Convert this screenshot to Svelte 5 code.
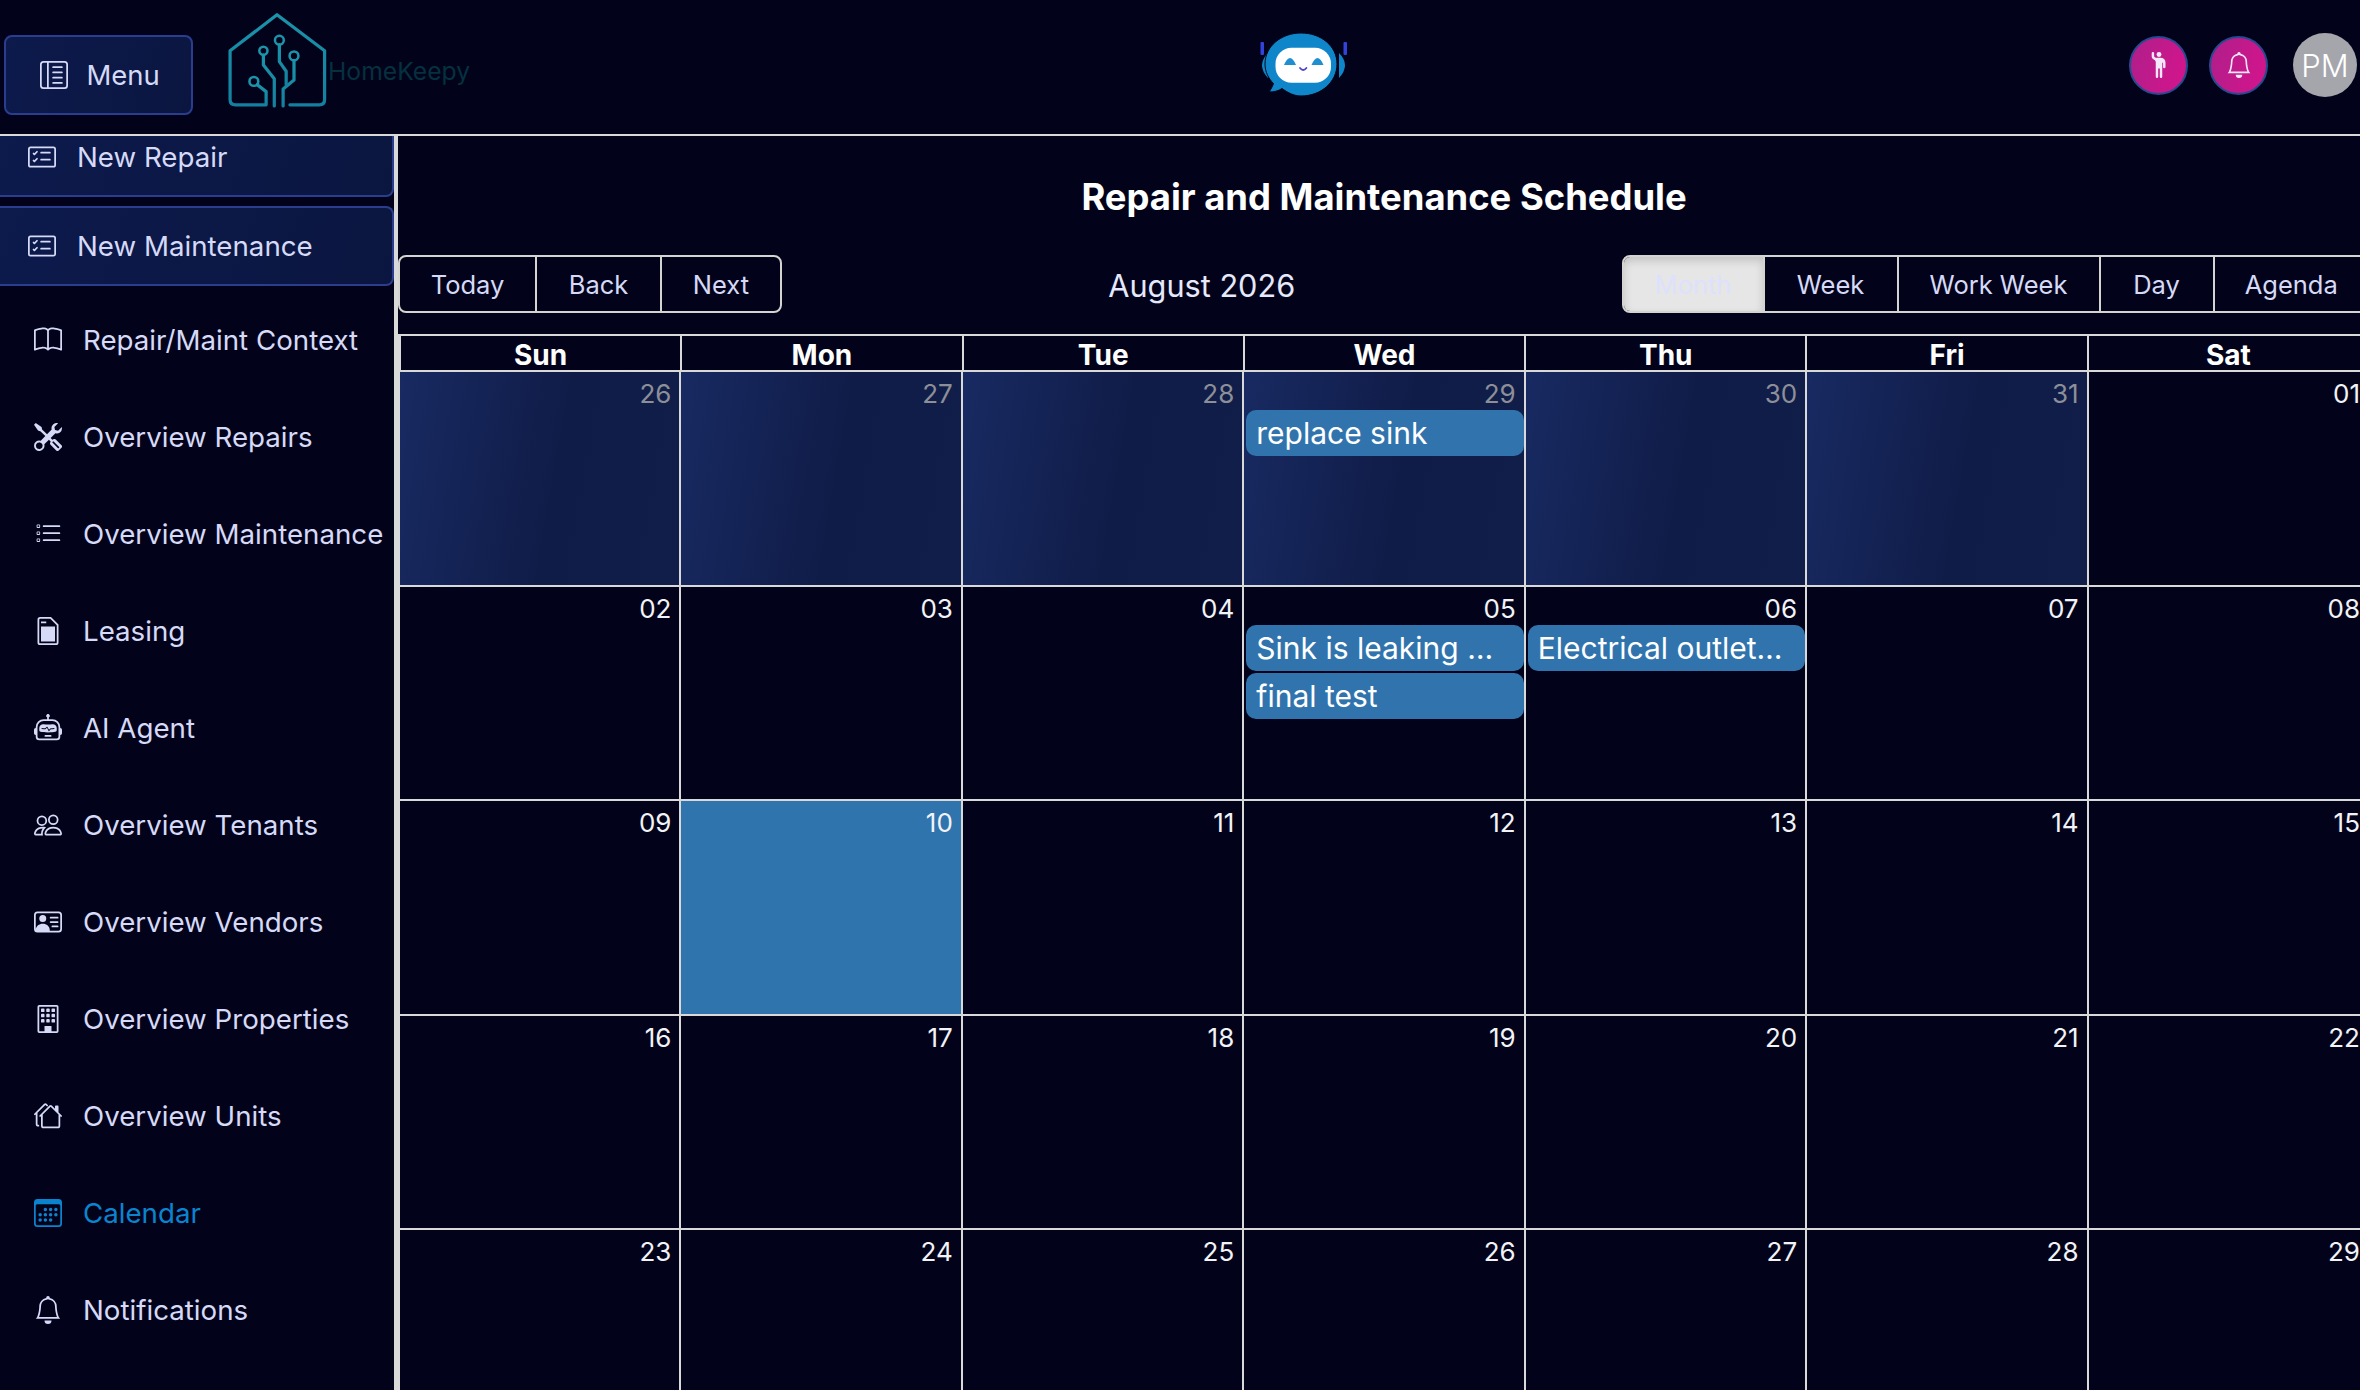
<script lang="ts">
	type Nav = { label: string; icon: string; active?: boolean };

	const icons: Record<string, string[]> = {
		menu: [
			'M12.5 3a.5.5 0 0 1 0 1h-5a.5.5 0 0 1 0-1zm0 3a.5.5 0 0 1 0 1h-5a.5.5 0 0 1 0-1zm.5 3.5a.5.5 0 0 0-.5-.5h-5a.5.5 0 0 0 0 1h5a.5.5 0 0 0 .5-.5m-.5 2.5a.5.5 0 0 1 0 1h-5a.5.5 0 0 1 0-1z',
			'M16 2a2 2 0 0 0-2-2H2a2 2 0 0 0-2 2v12a2 2 0 0 0 2 2h12a2 2 0 0 0 2-2zM4 1v14H2a1 1 0 0 1-1-1V2a1 1 0 0 1 1-1zm1 0h9a1 1 0 0 1 1 1v12a1 1 0 0 1-1 1H5z'
		],
		checklist: [
			'M14.5 3a.5.5 0 0 1 .5.5v9a.5.5 0 0 1-.5.5h-13a.5.5 0 0 1-.5-.5v-9a.5.5 0 0 1 .5-.5zm-13-1A1.5 1.5 0 0 0 0 3.5v9A1.5 1.5 0 0 0 1.5 14h13a1.5 1.5 0 0 0 1.5-1.5v-9A1.5 1.5 0 0 0 14.5 2z',
			'M7 5.5a.5.5 0 0 1 .5-.5h5a.5.5 0 0 1 0 1h-5a.5.5 0 0 1-.5-.5m-1.496-.854a.5.5 0 0 1 0 .708l-1.5 1.5a.5.5 0 0 1-.708 0l-.5-.5a.5.5 0 1 1 .708-.708l.146.147 1.146-1.147a.5.5 0 0 1 .708 0M7 9.5a.5.5 0 0 1 .5-.5h5a.5.5 0 0 1 0 1h-5a.5.5 0 0 1-.5-.5m-1.496-.854a.5.5 0 0 1 0 .708l-1.5 1.5a.5.5 0 0 1-.708 0l-.5-.5a.5.5 0 0 1 .708-.708l.146.147 1.146-1.147a.5.5 0 0 1 .708 0'
		],
		book: [
			'M1 2.828c.885-.37 2.154-.769 3.388-.893 1.33-.134 2.458.063 3.112.752v9.746c-.935-.53-2.12-.603-3.213-.493-1.18.12-2.37.461-3.287.811zm7.5-.141c.654-.689 1.782-.886 3.112-.752 1.234.124 2.503.523 3.388.893v9.923c-.918-.35-2.107-.692-3.287-.81-1.094-.111-2.278-.039-3.213.492zM8 1.783C7.015.936 5.587.81 4.287.94c-1.514.153-3.042.672-3.994 1.105A.5.5 0 0 0 0 2.5v11a.5.5 0 0 0 .707.455c.882-.4 2.303-.881 3.68-1.02 1.409-.142 2.59.087 3.223.877a.5.5 0 0 0 .78 0c.633-.79 1.814-1.019 3.222-.877 1.378.139 2.8.62 3.681 1.02A.5.5 0 0 0 16 13.5v-11a.5.5 0 0 0-.293-.455c-.952-.433-2.48-.952-3.994-1.105C10.413.809 8.985.936 8 1.783'
		],
		tools: [
			'M1 0 0 1l2.2 3.081a1 1 0 0 0 .815.419h.07a1 1 0 0 1 .708.293l2.675 2.675-2.617 2.654A3.003 3.003 0 0 0 0 13a3 3 0 1 0 5.878-.851l2.654-2.617.968.968-.305.914a1 1 0 0 0 .242 1.023l3.27 3.27a.997.997 0 0 0 1.414 0l1.586-1.586a.997.997 0 0 0 0-1.414l-3.27-3.27a1 1 0 0 0-1.023-.242L10.5 9.5l-.96-.96 2.68-2.643A3.005 3.005 0 0 0 16 3q0-.405-.102-.777l-2.14 2.141L12 4l-.364-1.757L13.777.102a3 3 0 0 0-3.675 3.68L7.462 6.46 4.793 3.793a1 1 0 0 1-.293-.707v-.071a1 1 0 0 0-.419-.814zm9.646 10.646a.5.5 0 0 1 .708 0l2.914 2.915a.5.5 0 0 1-.707.707l-2.915-2.914a.5.5 0 0 1 0-.708M3 11l.471.242.529.026.287.445.445.287.026.529L5 13l-.242.471-.026.529-.445.287-.287.445-.529.026L3 15l-.471-.242L2 14.732l-.287-.445L1.268 14l-.026-.529L1 13l.242-.471.026-.529.445-.287.287-.445.529-.026z'
		],
		listTask: [
			'M2 2.5a.5.5 0 0 0-.5.5v1a.5.5 0 0 0 .5.5h1a.5.5 0 0 0 .5-.5V3a.5.5 0 0 0-.5-.5zM3 3H2v1h1z',
			'M5 3.5a.5.5 0 0 1 .5-.5h9a.5.5 0 0 1 0 1h-9a.5.5 0 0 1-.5-.5M5.5 7a.5.5 0 0 0 0 1h9a.5.5 0 0 0 0-1zm0 4a.5.5 0 0 0 0 1h9a.5.5 0 0 0 0-1z',
			'M1.5 7a.5.5 0 0 1 .5-.5h1a.5.5 0 0 1 .5.5v1a.5.5 0 0 1-.5.5H2a.5.5 0 0 1-.5-.5zM2 7h1v1H2zm0 3.5a.5.5 0 0 0-.5.5v1a.5.5 0 0 0 .5.5h1a.5.5 0 0 0 .5-.5v-1a.5.5 0 0 0-.5-.5zm1 .5H2v1h1z'
		],
		lease: [
			'M3.5 0h6.2L14 4.3V14.5a1.5 1.5 0 0 1-1.5 1.5h-9A1.5 1.5 0 0 1 2 14.5v-13A1.5 1.5 0 0 1 3.5 0zm0 1a.5.5 0 0 0-.5.5v13a.5.5 0 0 0 .5.5h9a.5.5 0 0 0 .5-.5V4.7L9.3 1z',
			'M4 2.6h3v1H4zM4 5.4h8V14H4z'
		],
		robot: [
			'M6 12.5a.5.5 0 0 1 .5-.5h3a.5.5 0 0 1 0 1h-3a.5.5 0 0 1-.5-.5M3 8.062C3 6.76 4.235 5.765 5.53 5.886a26.6 26.6 0 0 0 4.94 0C11.765 5.765 13 6.76 13 8.062v1.157a.93.93 0 0 1-.765.935c-.845.147-2.34.346-4.235.346s-3.39-.2-4.235-.346A.93.93 0 0 1 3 9.219zm4.542-.827a.25.25 0 0 0-.217.068l-.92.9a25 25 0 0 1-1.871-.183.25.25 0 0 0-.068.495c.55.076 1.232.149 2.02.193a.25.25 0 0 0 .189-.071l.754-.736.847 1.71a.25.25 0 0 0 .404.062l.932-.97a25 25 0 0 0 1.922-.188.25.25 0 0 0-.068-.495c-.538.074-1.207.145-1.98.189a.25.25 0 0 0-.166.076l-.754.785-.842-1.7a.25.25 0 0 0-.182-.135',
			'M8.5 1.866a1 1 0 1 0-1 0V3h-2A4.5 4.5 0 0 0 1 7.5V8a1 1 0 0 0-1 1v2a1 1 0 0 0 1 1v1a2 2 0 0 0 2 2h10a2 2 0 0 0 2-2v-1a1 1 0 0 0 1-1V9a1 1 0 0 0-1-1v-.5A4.5 4.5 0 0 0 10.5 3h-2zM14 7.5V13a1 1 0 0 1-1 1H3a1 1 0 0 1-1-1V7.5A3.5 3.5 0 0 1 5.5 4h5A3.5 3.5 0 0 1 14 7.5'
		],
		people: [
			'M15 14s1 0 1-1-1-4-5-4-5 3-5 4 1 1 1 1zm-7.978-1L7 12.996c.001-.264.167-1.03.76-1.72C8.312 10.629 9.282 10 11 10c1.717 0 2.687.63 3.24 1.276.593.69.758 1.457.76 1.72l-.008.002-.014.002zM11 7a2 2 0 1 0 0-4 2 2 0 0 0 0 4m3-2a3 3 0 1 1-6 0 3 3 0 0 1 6 0M6.936 9.28a6 6 0 0 0-1.23-.247A7 7 0 0 0 5 9c-4 0-5 3-5 4q0 1 1 1h4.216A2.24 2.24 0 0 1 5 13c0-1.01.377-2.042 1.09-2.904.243-.294.526-.569.846-.816M4.92 10A5.5 5.5 0 0 0 4 13H1c0-.26.164-1.03.76-1.724.545-.636 1.492-1.256 3.16-1.275ZM1.5 5.5a3 3 0 1 1 6 0 3 3 0 0 1-6 0m3-2a2 2 0 1 0 0 4 2 2 0 0 0 0-4'
		],
		vcard: [
			'M5 8a2 2 0 1 0 0-4 2 2 0 0 0 0 4m4-2.5a.5.5 0 0 1 .5-.5h4a.5.5 0 0 1 0 1h-4a.5.5 0 0 1-.5-.5M9 8a.5.5 0 0 1 .5-.5h4a.5.5 0 0 1 0 1h-4A.5.5 0 0 1 9 8m1 2.5a.5.5 0 0 1 .5-.5h3a.5.5 0 0 1 0 1h-3a.5.5 0 0 1-.5-.5',
			'M2 2a2 2 0 0 0-2 2v8a2 2 0 0 0 2 2h12a2 2 0 0 0 2-2V4a2 2 0 0 0-2-2zM1 4a1 1 0 0 1 1-1h12a1 1 0 0 1 1 1v8a1 1 0 0 1-1 1H8.96q.04-.245.04-.5C9 10.567 7.21 9 5 9c-2.086 0-3.8 1.398-3.984 3.181A1 1 0 0 1 1 12z'
		],
		building: [
			'M4 2.5a.5.5 0 0 1 .5-.5h1a.5.5 0 0 1 .5.5v1a.5.5 0 0 1-.5.5h-1a.5.5 0 0 1-.5-.5zm3 0a.5.5 0 0 1 .5-.5h1a.5.5 0 0 1 .5.5v1a.5.5 0 0 1-.5.5h-1a.5.5 0 0 1-.5-.5zm3.5-.5a.5.5 0 0 0-.5.5v1a.5.5 0 0 0 .5.5h1a.5.5 0 0 0 .5-.5v-1a.5.5 0 0 0-.5-.5zM4 5.500a.5.5 0 0 1 .5-.5h1a.5.5 0 0 1 .5.5v1a.5.5 0 0 1-.5.5h-1a.5.5 0 0 1-.5-.5zM7.500 5a.5.5 0 0 0-.5.5v1a.5.5 0 0 0 .5.5h1a.5.5 0 0 0 .5-.5v-1a.5.5 0 0 0-.5-.5zm2.500.5a.5.5 0 0 1 .5-.5h1a.5.5 0 0 1 .5.5v1a.5.5 0 0 1-.5.5h-1a.5.5 0 0 1-.5-.5zM4.500 8a.5.5 0 0 0-.5.5v1a.5.5 0 0 0 .5.5h1a.5.5 0 0 0 .5-.5v-1a.5.5 0 0 0-.5-.5zm2.500.5a.5.5 0 0 1 .5-.5h1a.5.5 0 0 1 .5.5v1a.5.5 0 0 1-.5.5h-1a.5.5 0 0 1-.5-.5zm3.500-.5a.5.5 0 0 0-.5.5v1a.5.5 0 0 0 .5.5h1a.5.5 0 0 0 .5-.5v-1a.5.5 0 0 0-.5-.5z',
			'M2 1a1 1 0 0 1 1-1h10a1 1 0 0 1 1 1v14a1 1 0 0 1-1 1H3a1 1 0 0 1-1-1zm1 0v14h10V1z',
			'M6 12h4v3.5H6z'
		],
		houses: [
			'M5.793 1a1 1 0 0 1 1.414 0l.647.646a.5.5 0 1 1-.708.708L6.5 1.707 2 6.207V12.5a.5.5 0 0 0 .5.5.5.5 0 0 1 0 1A1.5 1.5 0 0 1 1 12.5V7.207l-.146.147a.5.5 0 0 1-.708-.708zm3 1a1 1 0 0 1 1.414 0L12 3.793V2.5a.5.5 0 0 1 .5-.5h1a.5.5 0 0 1 .5.5v3.293l1.854 1.853a.5.5 0 0 1-.708.708L15 8.207V13.5a1.5 1.5 0 0 1-1.5 1.5h-8A1.5 1.5 0 0 1 4 13.5V8.207l-.146.147a.5.5 0 1 1-.708-.708zm.707.707L5 7.207V13.5a.5.5 0 0 0 .5.5h8a.5.5 0 0 0 .5-.5V7.207z'
		],
		calendar: [
			'M14 0H2a2 2 0 0 0-2 2v12a2 2 0 0 0 2 2h12a2 2 0 0 0 2-2V2a2 2 0 0 0-2-2M1 3.857C1 3.384 1.448 3 2 3h12c.552 0 1 .384 1 .857v10.286c0 .473-.448.857-1 .857H2c-.552 0-1-.384-1-.857z',
			'M6.5 7a1 1 0 1 0 0-2 1 1 0 0 0 0 2m3 0a1 1 0 1 0 0-2 1 1 0 0 0 0 2m3 0a1 1 0 1 0 0-2 1 1 0 0 0 0 2m-9 3a1 1 0 1 0 0-2 1 1 0 0 0 0 2m3 0a1 1 0 1 0 0-2 1 1 0 0 0 0 2m3 0a1 1 0 1 0 0-2 1 1 0 0 0 0 2m3 0a1 1 0 1 0 0-2 1 1 0 0 0 0 2m-9 3a1 1 0 1 0 0-2 1 1 0 0 0 0 2m3 0a1 1 0 1 0 0-2 1 1 0 0 0 0 2m3 0a1 1 0 1 0 0-2 1 1 0 0 0 0 2'
		],
		bell: [
			'M8 16a2 2 0 0 0 2-2H6a2 2 0 0 0 2 2M8 1.918l-.797.161A4 4 0 0 0 4 6c0 .628-.134 2.197-.459 3.742-.16.767-.376 1.566-.663 2.258h10.244c-.287-.692-.502-1.49-.663-2.258C12.134 8.197 12 6.628 12 6a4 4 0 0 0-3.203-3.92zM14.22 12c.223.447.481.801.78 1H1c.299-.199.557-.553.78-1C2.68 10.2 3 6.88 3 6c0-2.42 1.72-4.44 4.005-4.901a1 1 0 1 1 1.99 0A5 5 0 0 1 13 6c0 .88.32 4.2 1.22 6'
		],
		hand: [
			'M6 6.207v9.043a.75.75 0 0 0 1.5 0V10.5a.5.5 0 0 1 1 0v4.75a.75.75 0 0 0 1.5 0v-8.5a.25.25 0 1 1 .5 0v2.5a.75.75 0 0 0 1.5 0V6.5a3 3 0 0 0-3-3H6.236a1 1 0 0 1-.447-.106l-.33-.165A.83.83 0 0 1 5 2.488V.75a.75.75 0 0 0-1.5 0v2.083c0 .715.404 1.37 1.044 1.689L5.5 5c.32.32.5.754.5 1.207',
			'M8 3a1.5 1.5 0 1 0 0-3 1.5 1.5 0 0 0 0 3'
		]
	};

	const navItems: Nav[] = [
		{ label: 'Repair/Maint Context', icon: 'book' },
		{ label: 'Overview Repairs', icon: 'tools' },
		{ label: 'Overview Maintenance', icon: 'listTask' },
		{ label: 'Leasing', icon: 'lease' },
		{ label: 'AI Agent', icon: 'robot' },
		{ label: 'Overview Tenants', icon: 'people' },
		{ label: 'Overview Vendors', icon: 'vcard' },
		{ label: 'Overview Properties', icon: 'building' },
		{ label: 'Overview Units', icon: 'houses' },
		{ label: 'Calendar', icon: 'calendar', active: true },
		{ label: 'Notifications', icon: 'bell' }
	];

	const dayNames = ['Sun', 'Mon', 'Tue', 'Wed', 'Thu', 'Fri', 'Sat'];

	const weeks = [
		['26', '27', '28', '29', '30', '31', '01'],
		['02', '03', '04', '05', '06', '07', '08'],
		['09', '10', '11', '12', '13', '14', '15'],
		['16', '17', '18', '19', '20', '21', '22'],
		['23', '24', '25', '26', '27', '28', '29']
	];

	const events: Record<string, string[]> = {
		'0-3': ['replace sink'],
		'1-3': ['Sink is leaking under the counter', 'final test'],
		'1-4': ['Electrical outlet not working']
	};

	const views = ['Month', 'Week', 'Work Week', 'Day', 'Agenda'];
</script>

{#snippet icon(name: string, cls: string)}
	<svg class={cls} viewBox="0 0 16 16" fill="currentColor" fill-rule={name === 'listTask' || name === 'building' ? 'evenodd' : 'nonzero'}>
		{#each icons[name] as d}
			<path {d} />
		{/each}
	</svg>
{/snippet}

<div class="page">
	<header class="topbar">
		<div class="brand">
			<button class="menu-btn" type="button">
				{@render icon('menu', 'menu-icon')}
				<span>Menu</span>
			</button>
			<svg class="logo" viewBox="680 30 300 300" fill="none" stroke-linecap="round" stroke-linejoin="round">
				<defs>
					<linearGradient id="logoGrad" x1="0" y1="0" x2="0" y2="1">
						<stop offset="0" stop-color="#1b93aa" />
						<stop offset="1" stop-color="#14809f" />
					</linearGradient>
				</defs>
				<g stroke="url(#logoGrad)" stroke-width="9.500">
					<path d="M795 309H708q-16 0-16-16V150L830 44 970 150V293q0 16-16 16H868" />
					<path d="M822 312V232L790 192V163" />
					<path d="M848 312V262L880 236V178" />
					<path d="M837 132V182L857 210V250" />
					<path d="M772 250L798 270V309" />
				</g>
				<g stroke="#1b93aa" stroke-width="7.500">
					<circle cx="790" cy="150" r="12" />
					<circle cx="837" cy="119" r="13" />
					<circle cx="880" cy="165" r="13" />
					<circle cx="762" cy="240" r="13" />
				</g>
			</svg>
			<span class="brand-name">HomeKeepy</span>
		</div>

		<svg class="bot" viewBox="0 0 90 70">
			<rect x="1.500" y="10" width="3.500" height="13" rx="1" fill="#3342d8" />
			<rect x="84.500" y="10" width="3.500" height="13" rx="1" fill="#3342d8" />
			<path d="M9 21Q-3 33 9 46Z" fill="#0f86ca" />
			<path d="M80 21Q92 33 80 46Z" fill="#0f86ca" />
			<path d="M42 1C22.500 1 6 14 6 32c0 8 3.500 14.500 8.500 19.500-1 3-3 6.500-4.500 8.500 5 0 9.500-1 13-3.500C29 61 35.500 64 42 64c20 0 36-14 36-32S62 1 42 1Z" fill="#0f86ca" stroke="#02041a" stroke-width="1" />
			<rect x="16.500" y="15.700" width="55.500" height="35" rx="16" fill="#fff" />
			<path d="M25 33q6-14 12 0M52.500 33q6-14 12 0" fill="#1f8fd0" />
			<path d="M41 36q3.200 4 6.400 0" fill="none" stroke="#4a44cf" stroke-width="1.800" stroke-linecap="round" />
		</svg>

		<div class="actions">
			<span class="round-btn">{@render icon('hand', 'round-icon')}</span>
			<span class="round-btn">{@render icon('bell', 'round-icon')}</span>
			<span class="avatar">PM</span>
		</div>
	</header>

	<div class="body">
		<aside class="sidebar">
			<div class="side-scroll">
				<button class="side-btn" type="button">
					{@render icon('checklist', 'nav-icon')}
					<span>New Repair</span>
				</button>
				<button class="side-btn" type="button">
					{@render icon('checklist', 'nav-icon')}
					<span>New Maintenance</span>
				</button>
				<nav class="nav">
					{#each navItems as item}
						<div class="nav-item" class:active={item.active}>
							{@render icon(item.icon, 'nav-icon')}
							<span>{item.label}</span>
						</div>
					{/each}
				</nav>
			</div>
		</aside>

		<main class="main">
			<h1>Repair and Maintenance Schedule</h1>

			<div class="toolbar">
				<div class="btn-group">
					<button type="button">Today</button>
					<button type="button">Back</button>
					<button type="button">Next</button>
				</div>
				<span class="month-label">August 2026</span>
				<div class="btn-group views">
					{#each views as v, i}
						<button type="button" class:on={i === 0}>{v}</button>
					{/each}
				</div>
			</div>

			<div class="calendar">
				<div class="head-row">
					{#each dayNames as d}
						<div class="head-cell">{d}</div>
					{/each}
				</div>
				{#each weeks as week, w}
					<div class="week">
						{#each week as date, d}
							<div class="cell" class:off={w === 0 && d < 6} class:today={w === 2 && d === 1}>
								<span class="date">{date}</span>
								{#each events[`${w}-${d}`] ?? [] as ev}
									<div class="event"><span>{ev}</span></div>
								{/each}
							</div>
						{/each}
					</div>
				{/each}
			</div>
		</main>
	</div>
</div>

<style>
	:global(body) {
		margin: 0;
		background: #02031a;
	}

	.page {
		width: 2360px;
		height: 1390px;
		overflow: hidden;
		background: #02031a;
		color: #d6daf7;
		font-family: Inter, 'Noto Sans', sans-serif;
	}

	button {
		font-family: inherit;
		color: inherit;
		cursor: pointer;
	}

	.topbar {
		height: 134px;
		border-bottom: 2px solid #d9d9d9;
		display: grid;
		grid-template-columns: 1258.5px auto 1fr;
		align-items: center;
		box-sizing: content-box;
	}

	.brand {
		display: flex;
		align-items: center;
		padding-left: 4px;
	}

	.menu-btn {
		width: 189px;
		height: 80px;
		margin-top: 15px;
		display: flex;
		align-items: center;
		gap: 18.5px;
		padding: 0 0 0 34px;
		border: 2px solid #2b3d8f;
		border-radius: 8px;
		background: linear-gradient(110deg, #0c1a4c, #0b1640);
		font-size: 27.5px;
		box-sizing: border-box;
	}

	.menu-icon {
		width: 28px;
		height: 28px;
	}

	.logo {
		width: 102px;
		height: 102px;
		margin: -12px 0 0 33px;
	}

	.brand-name {
		font-size: 24.7px;
		color: #05303f;
		margin: 8px 0 0 0;
	}

	.bot {
		width: 90px;
		height: 70px;
	}

	.actions {
		display: flex;
		align-items: center;
		justify-content: flex-end;
		padding-right: 3px;
		margin-top: -4px;
	}

	.round-btn {
		width: 59px;
		height: 59px;
		border-radius: 50%;
		border: 2px solid #244a8f;
		background: linear-gradient(110deg, #ae1f8a, #d6148c);
		display: flex;
		align-items: center;
		justify-content: center;
		margin-right: 21px;
		color: #f4e8fa;
		box-sizing: border-box;
	}

	.round-icon {
		width: 26px;
		height: 26px;
	}

	.avatar {
		width: 64px;
		height: 64px;
		border-radius: 50%;
		background: #a5a6ac;
		color: #fff;
		display: flex;
		align-items: center;
		justify-content: center;
		font-size: 31px;
		font-weight: 300;
		margin-left: 4px;
	}

	.body {
		display: flex;
		height: 1254px;
	}

	.sidebar {
		width: 394px;
		flex: none;
		border-right: 4px solid #d9d9d9;
		overflow: hidden;
	}

	.side-scroll {
		margin-top: -19px;
	}

	.side-btn {
		width: 100%;
		height: 80px;
		display: flex;
		align-items: center;
		gap: 21px;
		padding: 0 0 0 28px;
		margin-bottom: 9px;
		border: 2px solid #2b3d8f;
		border-left: none;
		border-radius: 0 8px 8px 0;
		background: linear-gradient(110deg, #0c1a4c, #0b1640);
		font-size: 27.7px;
		box-sizing: border-box;
		text-align: left;
	}

	.nav {
		margin-top: -4px;
	}

	.nav-item {
		position: relative;
		height: 97px;
		display: flex;
		align-items: center;
		gap: 21px;
		padding-left: 34px;
		font-size: 27.7px;
		white-space: nowrap;
	}

	.nav-item.active {
		color: #0b84cf;
	}

	.nav-item.active::after {
		content: '';
		position: absolute;
		top: 0;
		bottom: 0;
		right: -4px;
		width: 4px;
		background: #0b7fc7;
	}

	.nav-icon {
		width: 28px;
		height: 28px;
		flex: none;
	}

	.main {
		width: 1972px;
		flex: none;
	}

	h1 {
		margin: 0;
		height: 119px;
		line-height: 122px;
		text-align: center;
		color: #fff;
		font-size: 36.4px;
		font-weight: 700;
	}

	.toolbar {
		display: flex;
		align-items: center;
		height: 58px;
		margin-bottom: 21px;
	}

	.month-label {
		flex: 1;
		text-align: center;
		color: #e6e8fb;
		font-size: 30.700px;
		padding-top: 2px;
	}

	.btn-group {
		display: flex;
		height: 58px;
		border: 2px solid #d4d4d0;
		border-radius: 8px;
		box-sizing: border-box;
	}

	.btn-group button {
		background: none;
		border: none;
		border-left: 2px solid #d4d4d0;
		padding: 0;
		font-size: 25.5px;
		color: #d6daf7;
	}

	.btn-group button:first-child {
		border-left: none;
	}

	.btn-group:not(.views) button:nth-child(1) { width: 135px; }
	.btn-group:not(.views) button:nth-child(2) { width: 125px; }
	.btn-group:not(.views) button:nth-child(3) { width: 120px; }

	.views button:nth-child(1) { width: 139px; }
	.views button:nth-child(2) { width: 134px; }
	.views button:nth-child(3) { width: 202px; }
	.views button:nth-child(4) { width: 114px; }
	.views button:nth-child(5) { width: 155.5px; }

	.views {
		border-radius: 8px 0 0 8px;
	}

	.btn-group button.on {
		background: #e6e6e6;
		color: #dde1fd;
		box-shadow: inset 0 4px 8px rgba(0, 0, 0, 0.15);
		border-radius: 6px 0 0 6px;
	}

	.calendar {
		border-top: 2px solid #d9d9d9;
	}

	.head-row,
	.week {
		display: grid;
		grid-template-columns: repeat(7, 1fr);
	}

	.head-row {
		height: 34px;
		border-left: 3px solid #d9d9d9;
	}

	.head-cell {
		color: #fff;
		font-weight: 700;
		font-size: 28px;
		line-height: 38px;
		text-align: center;
		border-right: 2px solid #d9d9d9;
	}

	.week {
		height: 212.5px;
		border-top: 2px solid #d9d9d9;
		border-left: 2px solid #d9d9d9;
		overflow: hidden;
	}

	.cell {
		min-width: 0;
		border-right: 2px solid #d9d9d9;
		padding: 0;
	}

	.cell.off {
		background: linear-gradient(100deg, #182a62 0%, #101c48 55%, #111e4a 100%);
	}

	.cell.today {
		background: #3074ae;
	}

	.date {
		display: block;
		height: 38px;
		line-height: 44px;
		padding-right: 8px;
		text-align: right;
		color: #f2f3f6;
		font-size: 26px;
	}

	.cell.off .date {
		color: #8d8f98;
	}

	.event {
		height: 46px;
		margin: 0 0 2px 2px;
		padding: 0 18px 0 10px;
		border-radius: 10px;
		background: #3174ad;
		color: #fff;
		font-size: 30px;
		line-height: 46px;
		box-sizing: border-box;
		white-space: nowrap;
		overflow: hidden;
		text-overflow: ellipsis;
	}
</style>
